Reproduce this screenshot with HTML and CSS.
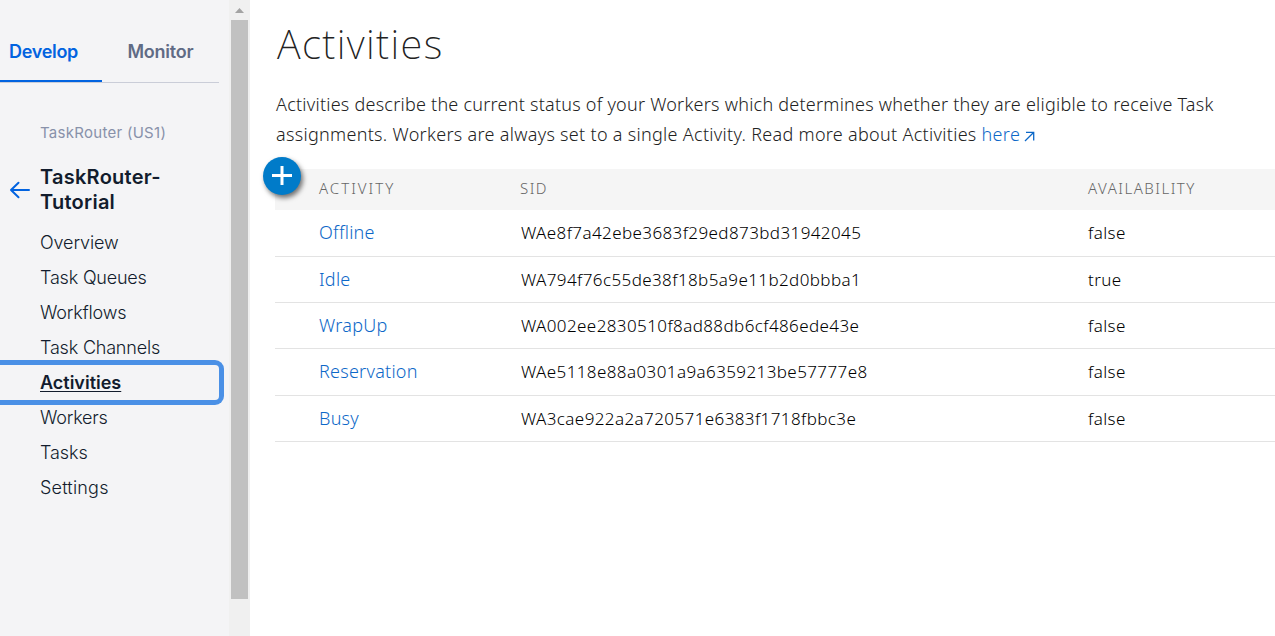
FILE: index.html
```html
<!DOCTYPE html>
<html lang="en">
<head>
<meta charset="utf-8">
<title>Activities</title>
<link rel="stylesheet" href="styles.css">
</head>
<body>
<div class="app">
  <aside class="sidebar">
    <nav class="tabs">
      <a class="tab tab-active">Develop</a>
      <a class="tab tab-rest">Monitor</a>
    </nav>
    <div class="product">TaskRouter (US1)</div>
    <div class="workspace">
      <svg class="back" width="22" height="18" viewBox="0 0 22 18" fill="none" stroke="#0263e0" stroke-width="2" stroke-linecap="round" stroke-linejoin="round"><path d="M20 9H2M9.500 1.800L2 9l7.500 7.200"/></svg>
      <h2>TaskRouter-<br>Tutorial</h2>
    </div>
    <ul class="menu">
      <li><a>Overview</a></li>
      <li class="snug"><a>Task Queues</a></li>
      <li class="snug"><a>Workflows</a></li>
      <li class="snug"><a>Task Channels</a></li>
      <li class="current"><a>Activities</a></li>
      <li class="snug"><a>Workers</a></li>
      <li><a>Tasks</a></li>
      <li class="loose"><a>Settings</a></li>
    </ul>
  </aside>
  <div class="scrollbar">
    <svg class="up" width="9" height="5" viewBox="0 0 9 5"><path d="M4.500 0L9 5H0z" fill="#a3a3a3"/></svg>
    <div class="thumb"></div>
  </div>
  <main class="content">
    <h1>Activities</h1>
    <p class="intro">Activities describe the current status of your Workers which determines whether they are eligible to receive Task<br><span class="second">assignments. Workers are always set to a single Activity. Read more about Activities <a>here</a></span><svg class="ext" width="11" height="11" viewBox="0 0 11 11" fill="none" stroke="#0d68c8" stroke-width="1.300"><path d="M1 10L9.300 1.700M2 1.300h7.700V9.500"/></svg></p>
    <div class="table">
      <button class="add" aria-label="Add"><svg width="20" height="20" viewBox="0 0 20 20" stroke="#fff" stroke-width="3"><path d="M10 0v19M0 9.500h20"/></svg></button>
      <div class="row head"><span class="wide">ACTIVITY</span><span>SID</span><span>AVAILABILITY</span></div>
      <div class="row first"><a>Offline</a><span class="sid">WAe8f7a42ebe3683f29ed873bd31942045</span><span>false</span></div>
      <div class="row"><a>Idle</a><span class="sid">WA794f76c55de38f18b5a9e11b2d0bbba1</span><span>true</span></div>
      <div class="row"><a>WrapUp</a><span class="sid">WA002ee2830510f8ad88db6cf486ede43e</span><span>false</span></div>
      <div class="row tall"><a>Reservation</a><span class="sid">WAe5118e88a0301a9a6359213be57777e8</span><span>false</span></div>
      <div class="row"><a>Busy</a><span class="sid">WA3cae922a2a720571e6383f1718fbbc3e</span><span>false</span></div>
    </div>
  </main>
</div>
</body>
</html>
```
FILE: styles.css
```css
* { box-sizing: border-box; }
body { margin: 0; background: #fff; font-family: "Noto Sans", sans-serif; font-weight: 300; }
.app { display: flex; height: 636px; overflow: hidden; }

.sidebar { width: 229px; flex: none; background: #f4f4f6; font-family: Inter, sans-serif; color: #121c2d; }
.tabs { display: flex; width: 219px; height: 83px; border-bottom: 1px solid #cacdd8; }
.tab { height: 82px; padding-top: 40px; font-size: 18px; line-height: 24px; font-weight: 600; letter-spacing: -0.3px; }
.tab-active { width: 102px; padding-left: 9px; color: #0263e0; border-bottom: 2px solid #0263e0; }
.tab-rest { padding-left: 25.500px; letter-spacing: -0.25px; color: #606b85; }
.product { padding: 40px 0 0 40px; font-size: 15px; line-height: 20px; font-weight: 400; letter-spacing: 0.28px; color: #8891aa; }
.workspace { display: flex; align-items: center; padding: 22px 0 0 9px; }
.back { margin-right: 9px; }
h2 { margin: 0; font-size: 20px; line-height: 25px; font-weight: 600; letter-spacing: 0.25px; }
.menu { list-style: none; margin: 10px 0 0; padding: 0; font-size: 18px; line-height: 35px; font-weight: 300; letter-spacing: -0.1px; }
.menu li { height: 35px; padding-left: 40px; }
.menu .snug { letter-spacing: -0.2px; }
.menu .loose { letter-spacing: 0.2px; }
.menu .current { width: 224px; height: 45px; margin: -5px 0; border: 5px solid #4a90e6; border-left: 0; border-radius: 0 9px 9px 0; font-weight: 600; text-decoration: underline; text-underline-offset: 2px; text-decoration-thickness: 1px; letter-spacing: 0; }

.scrollbar { width: 21px; flex: none; background: #f0f0f0; padding: 8px 0 0 2px; }
.up { display: block; margin: 0 0 7px 4px; }
.thumb { width: 17px; height: 579px; background: #c1c1c1; }

.content { flex: 1; padding: 18px 0 0 25px; color: #222; }
h1 { margin: 0 0 0 2px; font-size: 40px; line-height: 52px; font-weight: 200; letter-spacing: 1.35px; }
.intro { margin: 19px 0 0; padding-left: 1px; font-size: 18px; line-height: 30px; letter-spacing: 0.24px; white-space: nowrap; }
.second { letter-spacing: 0.3px; }
.intro a, .row a { color: #0d68c8; }
.ext { margin-left: 4px; position: relative; top: 1px; }
.table { position: relative; margin-top: 20px; }
.row { display: grid; grid-template-columns: 201px 568px 1fr; align-items: center; height: 46px; padding: 0 0 1px 44px; border-bottom: 1px solid #e3e3e3; font-size: 17px; color: #000; letter-spacing: 0.4px; }
.row.first, .row.tall { height: 47px; padding-bottom: 2px; }
.row a { font-size: 18px; letter-spacing: 0.25px; }
.row.head { height: 41px; padding-bottom: 3px; background: #f5f5f5; border: 0; font-size: 15px; color: #666; letter-spacing: 1.5px; }
.row .wide { letter-spacing: 2px; }
.row .sid { padding-left: 1px; }
.add { position: absolute; left: -12px; top: -12px; width: 38px; height: 38px; padding: 0 0 1px; border: 0; border-radius: 50%; background: #007bc9; box-shadow: 2px 3px 5px rgba(0,0,0,.55); display: flex; align-items: center; justify-content: center; }
```
